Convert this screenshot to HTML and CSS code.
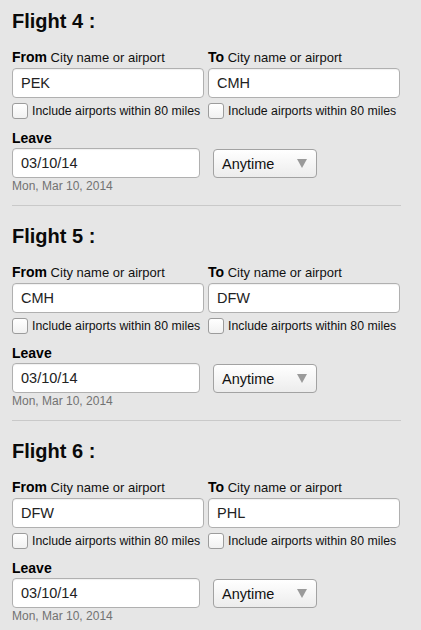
FILE: index.html
```html
<!DOCTYPE html>
<html>
<head>
<meta charset="utf-8">
<link rel="stylesheet" href="styles.css">
</head>
<body>
<div class="page">
  <section class="flight">
    <h2 class="title">Flight 4 :</h2>
    <div class="cols">
      <div class="col">
        <div class="label"><b>From</b> City name or airport</div>
        <div class="field">PEK</div>
        <label class="check"><span class="box"></span>Include airports within 80 miles</label>
      </div>
      <div class="col">
        <div class="label"><b>To</b> City name or airport</div>
        <div class="field">CMH</div>
        <label class="check"><span class="box"></span>Include airports within 80 miles</label>
      </div>
    </div>
    <div class="label leave"><b>Leave</b></div>
    <div class="when">
      <div class="field date">03/10/14</div>
      <div class="select"><span>Anytime</span><span class="arrow"></span></div>
    </div>
    <div class="hint">Mon, Mar 10, 2014</div>
  </section>
  <section class="flight">
    <h2 class="title">Flight 5 :</h2>
    <div class="cols">
      <div class="col">
        <div class="label"><b>From</b> City name or airport</div>
        <div class="field">CMH</div>
        <label class="check"><span class="box"></span>Include airports within 80 miles</label>
      </div>
      <div class="col">
        <div class="label"><b>To</b> City name or airport</div>
        <div class="field">DFW</div>
        <label class="check"><span class="box"></span>Include airports within 80 miles</label>
      </div>
    </div>
    <div class="label leave"><b>Leave</b></div>
    <div class="when">
      <div class="field date">03/10/14</div>
      <div class="select"><span>Anytime</span><span class="arrow"></span></div>
    </div>
    <div class="hint">Mon, Mar 10, 2014</div>
  </section>
  <section class="flight">
    <h2 class="title">Flight 6 :</h2>
    <div class="cols">
      <div class="col">
        <div class="label"><b>From</b> City name or airport</div>
        <div class="field">DFW</div>
        <label class="check"><span class="box"></span>Include airports within 80 miles</label>
      </div>
      <div class="col">
        <div class="label"><b>To</b> City name or airport</div>
        <div class="field">PHL</div>
        <label class="check"><span class="box"></span>Include airports within 80 miles</label>
      </div>
    </div>
    <div class="label leave"><b>Leave</b></div>
    <div class="when">
      <div class="field date">03/10/14</div>
      <div class="select"><span>Anytime</span><span class="arrow"></span></div>
    </div>
    <div class="hint">Mon, Mar 10, 2014</div>
  </section>
</div>
</body>
</html>
```
FILE: styles.css
```css
* { box-sizing: border-box; }
html, body { margin: 0; padding: 0; }
body {
  background: #e6e6e6;
  font-family: "Liberation Sans", Arial, Helvetica, sans-serif;
  color: #000;
  width: 421px;
  height: 630px;
  overflow: hidden;
}
.page {
  padding: 0 20px 0 12px;
}
.flight {
  padding: 18px 0 12px;
  border-bottom: 1px solid #c9c9c9;
}
.flight:first-child { padding-top: 9px; }
.title {
  margin: 0;
  font-size: 20px;
  line-height: 24px;
  font-weight: bold;
  color: #0a0a0a;
}
.cols {
  display: grid;
  grid-template-columns: 192px 192px;
  column-gap: 4px;
  margin-top: 16px;
}
.label {
  font-size: 13px;
  line-height: 16px;
  height: 16px;
  white-space: nowrap;
  color: #111;
}
.label b {
  font-size: 14px;
  font-weight: bold;
  color: #000;
}
.field {
  margin-top: 3px;
  height: 30px;
  background: #fff;
  border: 1px solid #b0b0b0;
  border-radius: 4px;
  padding: 0 8px;
  font-size: 14.5px;
  line-height: 28px;
  color: #222;
  box-shadow: inset 0 1px 1px rgba(0,0,0,0.06);
}
.check {
  display: flex;
  align-items: center;
  gap: 4px;
  margin-top: 5px;
  font-size: 12.3px;
  line-height: 16px;
  color: #111;
  white-space: nowrap;
}
.box {
  width: 16px;
  height: 16px;
  flex: none;
  border: 1px solid #9c9c9c;
  border-radius: 3px;
  background: linear-gradient(#ffffff, #f1f1f1);
}
.leave { margin-top: 11px; }
.when {
  display: flex;
  align-items: center;
  gap: 13px;
  margin-top: 2px;
}
.field.date {
  margin-top: 0;
  width: 188px;
}
.select {
  width: 104px;
  height: 29px;
  margin-top: 1px;
  border: 1px solid #a2a2a2;
  border-radius: 4px;
  background: linear-gradient(#ffffff, #ececec);
  display: flex;
  align-items: center;
  justify-content: space-between;
  padding: 0 9px 0 8px;
  font-size: 14.5px;
  color: #111;
}
.arrow {
  width: 0;
  height: 0;
  border-left: 5.5px solid transparent;
  border-right: 5.5px solid transparent;
  border-top: 9px solid #9a9a9a;
}
.hint {
  margin-top: 2px;
  font-size: 12px;
  line-height: 13px;
  color: #727272;
}
```
